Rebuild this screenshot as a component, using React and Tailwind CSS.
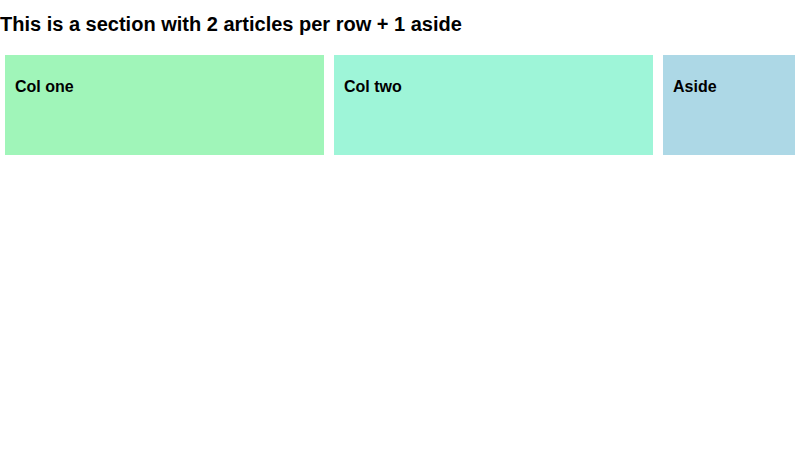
export default function App() {
  return (
    <div className="min-h-screen bg-white text-black font-['Liberation_Sans',Arial,sans-serif]">
      <h2 className="pt-[13px] text-[20px] leading-[23px] font-bold">
        This is a section with 2 articles per row + 1 aside
      </h2>
      <section className="mt-[19px] px-[5px] grid grid-cols-[1fr_1fr_132px] gap-[10px]">
        <article className="h-[100px] bg-[#a0f5b9] px-[10px] pt-[23px]">
          <h3 className="text-[16px] leading-[18px] font-bold">Col one</h3>
        </article>
        <article className="h-[100px] bg-[#9ef5d8] px-[10px] pt-[23px]">
          <h3 className="text-[16px] leading-[18px] font-bold">Col two</h3>
        </article>
        <aside className="h-[100px] bg-[#add8e6] px-[10px] pt-[23px]">
          <h3 className="text-[16px] leading-[18px] font-bold">Aside</h3>
        </aside>
      </section>
    </div>
  );
}
